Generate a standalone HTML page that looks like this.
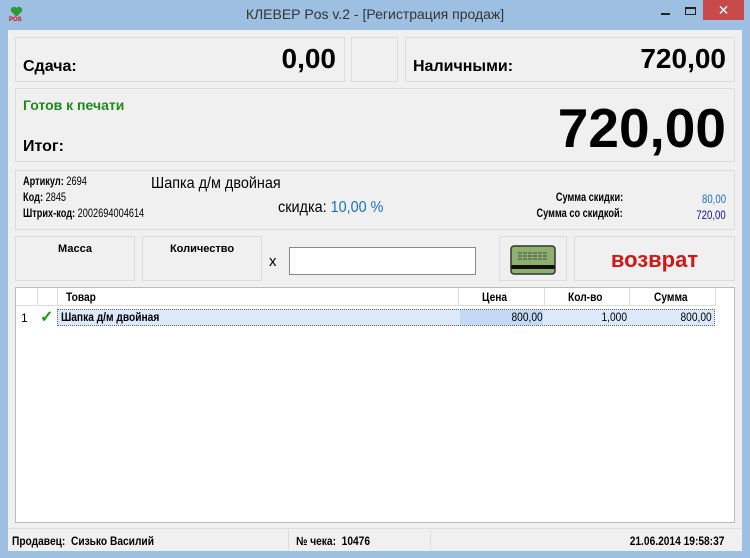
<!DOCTYPE html><html><head><meta charset="utf-8"><style>
*{margin:0;padding:0;box-sizing:border-box}
body{width:750px;height:558px;background:#9dc0e2;font-family:"Liberation Sans",sans-serif;position:relative;overflow:hidden}
.a{position:absolute}
.client{left:8px;top:30px;width:734px;height:521px;background:#f0f0f0}
.p{position:absolute;background:#f0f0f0;border:1px solid #dcdcdc}
.b{font-weight:bold}
.sl{transform:scaleX(0.8);transform-origin:left top;white-space:nowrap}
.sr{transform:scaleX(0.8);transform-origin:right top;white-space:nowrap}
</style></head><body>
<div class="a" style="left:8px;top:4px;width:18px;height:18px">
<svg width="18" height="18"><circle cx="6" cy="6" r="3.2" fill="#2a9a3a"/><circle cx="11" cy="6" r="3.2" fill="#2a9a3a"/><circle cx="8.5" cy="9" r="3" fill="#2a9a3a"/><text x="1" y="17" font-size="6" font-weight="bold" fill="#d00" font-family="Liberation Sans">POS</text></svg></div>
<div class="a" style="left:0;top:6px;width:750px;text-align:center;font-size:14px;color:#333">КЛЕВЕР Pos v.2 - [Регистрация продаж]</div>
<div class="a" style="left:661px;top:13px;width:9px;height:2px;background:#222"></div>
<div class="a" style="left:685px;top:7px;width:11px;height:8px;border:1px solid #222;border-top-width:2px"></div>
<div class="a" style="left:703px;top:0;width:41px;height:20px;background:#c7494a;color:#fff;text-align:center;font-size:14px;line-height:20px">✕</div>
<div class="a client"></div>
<div class="p" style="left:15px;top:37px;width:330px;height:45px"><span class="a b" style="left:7px;top:20px;font-size:16px">Сдача:</span><span class="a b" style="right:8px;top:5px;font-size:28px">0,00</span></div>
<div class="p" style="left:351px;top:37px;width:47px;height:45px"></div>
<div class="p" style="left:405px;top:37px;width:330px;height:45px"><span class="a b" style="left:7px;top:20px;font-size:16px">Наличными:</span><span class="a b" style="right:8px;top:5px;font-size:28px">720,00</span></div>
<div class="p" style="left:15px;top:88px;width:720px;height:74px"><span class="a b" style="left:7px;top:8px;font-size:14px;color:#1e8a1e">Готов к печати</span><span class="a b" style="left:7px;top:49px;font-size:16px">Итог:</span><span class="a b" style="right:8px;top:6px;font-size:55px;line-height:66px">720,00</span></div>
<div class="p" style="left:15px;top:170px;width:720px;height:60px">
<span class="a sl" style="left:7px;top:5px;font-size:11.5px"><b>Артикул:</b> 2694</span>
<span class="a sl" style="left:7px;top:21px;font-size:11.5px"><b>Код:</b> 2845</span>
<span class="a sl" style="left:7px;top:37px;font-size:11.5px"><b>Штрих-код:</b> 2002694004614</span>
<span class="a sl" style="left:135px;top:4px;font-size:16px;transform:scaleX(0.9)">Шапка д/м двойная</span>
<span class="a sl" style="left:262px;top:28px;font-size:16px;transform:scaleX(0.9)">скидка: <span style="color:#1a6fc0">10,00 %</span></span>
<span class="a b sr" style="right:111px;top:21px;font-size:11.5px">Сумма скидки:</span>
<span class="a b sr" style="right:111px;top:37px;font-size:11.5px">Сумма со скидкой:</span>
<span class="a sr" style="right:8px;top:21px;font-size:12px;color:#1a6fc0">80,00</span>
<span class="a sr" style="right:8px;top:37px;font-size:12px;color:#1010a0">720,00</span>
</div>
<div class="p" style="left:15px;top:236px;width:120px;height:45px;text-align:center;padding-top:6px;font-size:11px" ><b>Масса</b></div>
<div class="p" style="left:142px;top:236px;width:120px;height:45px;text-align:center;padding-top:6px;font-size:11px"><b>Количество</b></div>
<span class="a" style="left:269px;top:253px;font-size:15px">x</span>
<div class="a" style="left:289px;top:247px;width:187px;height:28px;background:#fff;border:1px solid #888"></div>
<div class="p" style="left:499px;top:236px;width:68px;height:45px"><svg class="a" style="left:10px;top:8px" width="46" height="30"><rect x="1" y="1" width="44" height="28" rx="3" fill="#8fb06a" stroke="#333" stroke-width="1.5"/><rect x="1.5" y="20" width="43" height="4" fill="#111"/><path d="M8 8h30M8 11h30M8 14h30" stroke="#445" stroke-width="1" stroke-dasharray="4 1"/></svg></div>
<div class="p" style="left:574px;top:236px;width:161px;height:45px;text-align:center;line-height:45px;font-size:22px;color:#d01818;font-weight:bold">возврат</div>
<div class="a" style="left:15px;top:287px;width:720px;height:236px;background:#fff;border:1px solid #bbb">
<div class="a" style="left:0;top:0;width:700px;height:18px;font-size:12px;border-bottom:1px solid #ddd">
<span class="a" style="left:21px;top:0;height:18px;border-left:1px solid #ddd"></span>
<span class="a" style="left:41px;top:0;height:18px;border-left:1px solid #ddd"></span>
<span class="a b sl" style="left:50px;top:2px;transform:scaleX(0.85)">Товар</span>
<span class="a" style="left:442px;top:0;height:18px;border-left:1px solid #ddd"></span>
<span class="a b sl" style="left:466px;top:2px;transform:scaleX(0.85)">Цена</span>
<span class="a" style="left:528px;top:0;height:18px;border-left:1px solid #ddd"></span>
<span class="a b sl" style="left:552px;top:2px;transform:scaleX(0.85)">Кол-во</span>
<span class="a" style="left:613px;top:0;height:18px;border-left:1px solid #ddd"></span>
<span class="a b sl" style="left:638px;top:2px;transform:scaleX(0.85)">Сумма</span>
<span class="a" style="left:699px;top:0;height:18px;border-left:1px solid #ddd"></span>
</div>
<span class="a" style="left:5px;top:23px;font-size:12px">1</span>
<span class="a" style="left:24px;top:19px;font-size:16px;color:#1a9a1a;font-weight:bold">✓</span>
<div class="a" style="left:41px;top:21px;width:658px;height:17px;background:#dbe9fb;border:1px dotted #666;font-size:12px">
<div class="a" style="left:402px;top:0;width:83px;height:15px;background:#c4d9f6"></div>
<span class="a b sl" style="left:3px;top:0px;transform:scaleX(0.85)">Шапка д/м двойная</span>
<span class="a sr" style="right:171px;top:0px;transform:scaleX(0.85)">800,00</span>
<span class="a sr" style="right:87px;top:0px;transform:scaleX(0.85)">1,000</span>
<span class="a sr" style="right:2px;top:0px;transform:scaleX(0.85)">800,00</span>
</div>
</div>
<div class="a" style="left:8px;top:528px;width:734px;height:1px;background:#ddd"></div>
<div class="a" style="left:288px;top:530px;width:1px;height:20px;background:#ddd"></div>
<div class="a" style="left:430px;top:530px;width:1px;height:20px;background:#ddd"></div>
<span class="a b sl" style="left:12px;top:534px;font-size:12px;transform:scaleX(0.85)">Продавец:&nbsp; Сизько Василий</span>
<span class="a b sl" style="left:296px;top:534px;font-size:12px;transform:scaleX(0.85)">№ чека:&nbsp; 10476</span>
<span class="a b sr" style="right:26px;top:534px;font-size:12px;transform:scaleX(0.85)">21.06.2014 19:58:37</span>
</body></html>
